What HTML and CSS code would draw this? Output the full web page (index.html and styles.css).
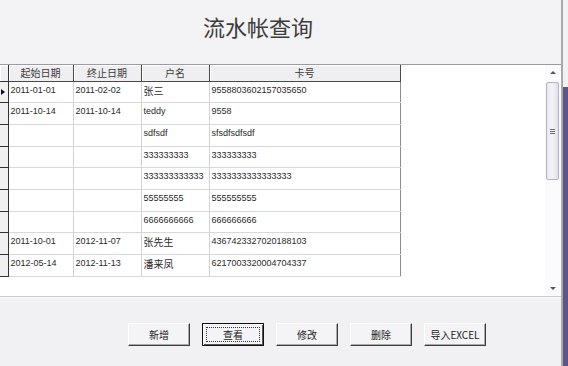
FILE: index.html
```html
<!DOCTYPE html>
<html>
<head>
<meta charset="utf-8">
<link rel="stylesheet" href="styles.css">
</head>
<body>
<div class="window">
  <div class="main">
    <div class="title-area"><h1 class="title">流水帐查询</h1></div>
    <div class="grid-area">
      <div class="grid-wrap">
        <table class="grid">
          <colgroup>
            <col class="c-sel"><col class="c-1"><col class="c-2"><col class="c-3"><col class="c-4">
          </colgroup>
          <thead>
            <tr><th class="sel"></th><th>起始日期</th><th>终止日期</th><th>户名</th><th>卡号</th></tr>
          </thead>
          <tbody>
            <tr><td class="sel"><span class="arrow"></span></td><td>2011-01-01</td><td>2011-02-02</td><td class="cjk">张三</td><td>9558803602157035650</td></tr>
            <tr><td class="sel"></td><td>2011-10-14</td><td>2011-10-14</td><td>teddy</td><td>9558</td></tr>
            <tr><td class="sel"></td><td></td><td></td><td>sdfsdf</td><td>sfsdfsdfsdf</td></tr>
            <tr><td class="sel"></td><td></td><td></td><td>333333333</td><td>333333333</td></tr>
            <tr><td class="sel"></td><td></td><td></td><td>333333333333</td><td>3333333333333333</td></tr>
            <tr><td class="sel"></td><td></td><td></td><td>55555555</td><td>555555555</td></tr>
            <tr><td class="sel"></td><td></td><td></td><td>6666666666</td><td>666666666</td></tr>
            <tr><td class="sel"></td><td>2011-10-01</td><td>2012-11-07</td><td class="cjk">张先生</td><td>4367423327020188103</td></tr>
            <tr><td class="sel"></td><td>2012-05-14</td><td>2012-11-13</td><td class="cjk">潘来凤</td><td>6217003320004704337</td></tr>
          </tbody>
        </table>
      </div>
      <div class="scrollbar">
        <div class="sb-btn"><span class="tri-up"></span></div>
        <div class="sb-thumb"><span class="grip"></span><span class="grip"></span><span class="grip"></span></div>
        <div class="sb-track"></div>
        <div class="sb-btn"><span class="tri-down"></span></div>
      </div>
    </div>
    <div class="bottom-area">
      <button class="btn">新增</button>
      <button class="btn focus"><span class="focus-ring">查看</span></button>
      <button class="btn">修改</button>
      <button class="btn">删除</button>
      <button class="btn">导入EXCEL</button>
    </div>
  </div>
  <div class="frame">
    <div class="frame-line"></div>
    <div class="frame-edge"></div>
  </div>
</div>
</body>
</html>
```
FILE: styles.css
```css
* { box-sizing: border-box; }
html, body { margin: 0; padding: 0; }
body {
  width: 568px;
  height: 366px;
  overflow: hidden;
  background: #f2f1f4;
  font-family: "Liberation Sans", "Noto Sans CJK SC", sans-serif;
  font-size: 9px;
  color: #222;
}
.window {
  display: flex;
  height: 366px;
}
.main {
  width: 561px;
  display: flex;
  flex-direction: column;
}
.title-area {
  height: 64px;
  display: flex;
  align-items: center;
  justify-content: center;
  padding-right: 45px;
  padding-bottom: 12px;
  background: #f3f2f4;
}
.title {
  margin: 0;
  font-family: "Noto Sans CJK SC", sans-serif;
  font-weight: 400;
  font-size: 22px;
  color: #3c3c3c;
}
.grid-area {
  height: 233px;
  display: flex;
  background: #fff;
  border-top: 1px solid #9c9aa2;
  border-bottom: 1px solid #c9c8cc;
}
.grid-wrap {
  flex: 1;
}
.grid {
  border-collapse: collapse;
  table-layout: fixed;
  width: 400px;
}
.c-sel { width: 8px; }
.c-1 { width: 65px; }
.c-2 { width: 68px; }
.c-3 { width: 68px; }
.c-4 { width: 191px; }
.grid th {
  height: 16px;
  padding: 0;
  background: #efeef0;
  border-right: 1px solid #4a4a4a;
  border-bottom: 1px solid #4a4a4a;
  box-shadow: inset 1px 1px 0 #fff;
  font-family: "Noto Sans CJK SC", sans-serif;
  font-weight: 400;
  font-size: 10px;
  line-height: 14px;
  color: #3a3a3a;
  text-align: center;
}
.grid td {
  height: 21.7px;
  padding: 3px 0 0 2px;
  vertical-align: top;
  border-right: 1px solid #d2d2d4;
  border-bottom: 1px solid #d8d8da;
  white-space: nowrap;
  overflow: hidden;
  color: #2a2a2a;
  line-height: 11px;
}
.grid td.cjk {
  font-family: "Noto Sans CJK SC", sans-serif;
  font-size: 10px;
  line-height: 13px;
  padding-top: 2px;
}
.grid td:last-child { border-right-color: #8c8c90; }
.grid .sel {
  padding: 0;
  background: #f0eff1;
  border-right: 1px solid #333;
  border-bottom: 1px solid #333;
  vertical-align: middle;
}
.arrow {
  display: block;
  width: 0;
  height: 0;
  margin-left: 1px;
  border-top: 3px solid transparent;
  border-bottom: 3px solid transparent;
  border-left: 4px solid #111;
}
.scrollbar {
  width: 15px;
  margin-right: 1px;
  display: flex;
  flex-direction: column;
  background: #fbfbfd;
}
.sb-btn {
  height: 15px;
  display: flex;
  align-items: center;
  justify-content: center;
}
.tri-up {
  width: 0; height: 0;
  border-left: 3px solid transparent;
  border-right: 3px solid transparent;
  border-bottom: 3px solid #555;
}
.tri-down {
  width: 0; height: 0;
  border-left: 3px solid transparent;
  border-right: 3px solid transparent;
  border-top: 3px solid #555;
}
.sb-thumb {
  height: 98px;
  margin: 2px 1px 0 1px;
  border: 1px solid #b4b2c2;
  border-radius: 2px;
  background: linear-gradient(to right, #ebe9f2, #f4f3f8 50%, #e2e0ea);
  display: flex;
  flex-direction: column;
  align-items: center;
  justify-content: center;
  gap: 1px;
}
.grip {
  width: 5px;
  height: 1px;
  background: #6a6a78;
}
.sb-track { flex: 1; }
.bottom-area {
  flex: 1;
  border-top: 1px solid #fbfbfc;
  display: flex;
  align-items: flex-start;
  gap: 12px;
  padding: 25px 0 0 128px;
  background: #f1f0f3;
}
.btn {
  width: 62px;
  height: 23px;
  padding: 0;
  background: #f4f3f6;
  border: 1px solid;
  border-color: #ffffff #3c3c3c #3c3c3c #ffffff;
  box-shadow: inset -1px -1px 0 #a8a8ac;
  font-family: "Noto Sans CJK SC", sans-serif;
  font-size: 10px;
  color: #222;
  display: flex;
  align-items: center;
  justify-content: center;
}
.btn.focus {
  border: 1px solid #111;
  box-shadow: inset 1px 1px 0 #fff, inset -1px -1px 0 #555;
  padding: 3px;
}
.focus-ring {
  flex: 1;
  align-self: stretch;
  border: 1px dotted #333;
  display: flex;
  align-items: center;
  justify-content: center;
}
.frame {
  width: 7px;
  display: flex;
}
.frame-line {
  width: 2px;
  background: #a9a8b0;
}
.frame-edge {
  flex: 1;
  margin-top: 87px;
  background: #5d5488;
}
```
